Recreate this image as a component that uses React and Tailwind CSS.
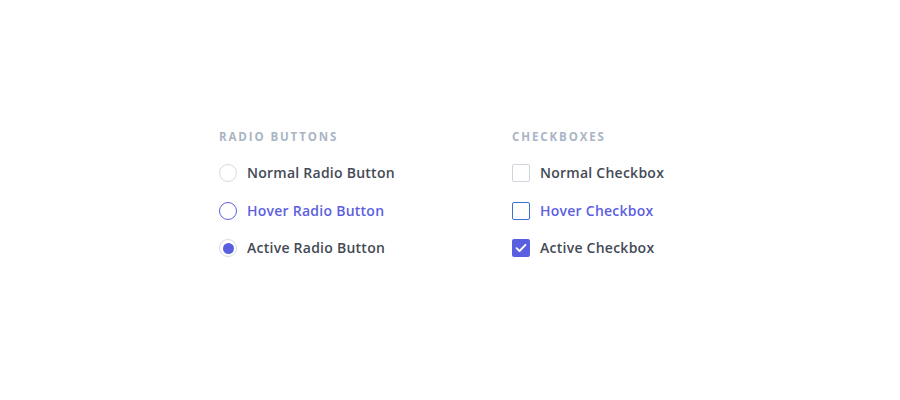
export default function App() {
  const font = { fontFamily: "'Open Sans', Lato, sans-serif" };

  return (
    <div className="w-[900px] h-[400px] bg-white pl-[219px] pt-[130px]" style={font}>
      <div className="flex gap-[175px]">
        <div className="w-[118px]">
          <h3 className="text-[11.5px] font-bold tracking-[1.9px] text-[#a9b5c4] leading-[14px] whitespace-nowrap">RADIO BUTTONS</h3>
          <div className="mt-[20px] flex flex-col gap-[19.5px]">
            <label className="flex items-center gap-[10px] whitespace-nowrap">
              <span className="shrink-0 w-[18px] h-[18px] rounded-full border border-[#d5dbe3] bg-white"></span>
              <span className="text-[14px] font-semibold tracking-[0.25px] text-[#444a55] leading-[18px]">Normal Radio Button</span>
            </label>
            <label className="flex items-center gap-[10px] whitespace-nowrap">
              <span className="shrink-0 w-[18px] h-[18px] rounded-full border-[1.5px] border-[#5d5fe0] bg-white"></span>
              <span className="text-[14px] font-semibold tracking-[0.25px] text-[#5d5fe0] leading-[18px]">Hover Radio Button</span>
            </label>
            <label className="flex items-center gap-[10px] whitespace-nowrap">
              <span className="shrink-0 w-[18px] h-[18px] rounded-full border border-[#d5dbe3] bg-white flex items-center justify-center">
                <span className="w-[11px] h-[11px] rounded-full bg-[#5a5fe0]"></span>
              </span>
              <span className="text-[14px] font-semibold tracking-[0.25px] text-[#444a55] leading-[18px]">Active Radio Button</span>
            </label>
          </div>
        </div>
        <div>
          <h3 className="text-[11.5px] font-bold tracking-[1.9px] text-[#a9b5c4] leading-[14px]">CHECKBOXES</h3>
          <div className="mt-[20px] flex flex-col gap-[19.5px]">
            <label className="flex items-center gap-[10px] whitespace-nowrap">
              <span className="shrink-0 w-[18px] h-[18px] rounded-[2px] border border-[#d0d5dc] bg-white"></span>
              <span className="text-[14px] font-semibold tracking-[0.25px] text-[#444a55] leading-[18px]">Normal Checkbox</span>
            </label>
            <label className="flex items-center gap-[10px] whitespace-nowrap">
              <span className="shrink-0 w-[18px] h-[18px] rounded-[2px] border-[1.5px] border-[#3b6fd6] bg-white"></span>
              <span className="text-[14px] font-semibold tracking-[0.25px] text-[#5d5fe0] leading-[18px]">Hover Checkbox</span>
            </label>
            <label className="flex items-center gap-[10px] whitespace-nowrap">
              <span className="shrink-0 w-[18px] h-[18px] rounded-[2px] bg-[#5a5fe0] flex items-center justify-center">
                <svg width="12" height="10" viewBox="0 0 12 10" fill="none">
                  <path d="M1.5 5.2L4.5 8L10.5 1.8" stroke="white" strokeWidth="1.8" strokeLinecap="round" strokeLinejoin="round" />
                </svg>
              </span>
              <span className="text-[14px] font-semibold tracking-[0.25px] text-[#444a55] leading-[18px]">Active Checkbox</span>
            </label>
          </div>
        </div>
      </div>
    </div>
  );
}
